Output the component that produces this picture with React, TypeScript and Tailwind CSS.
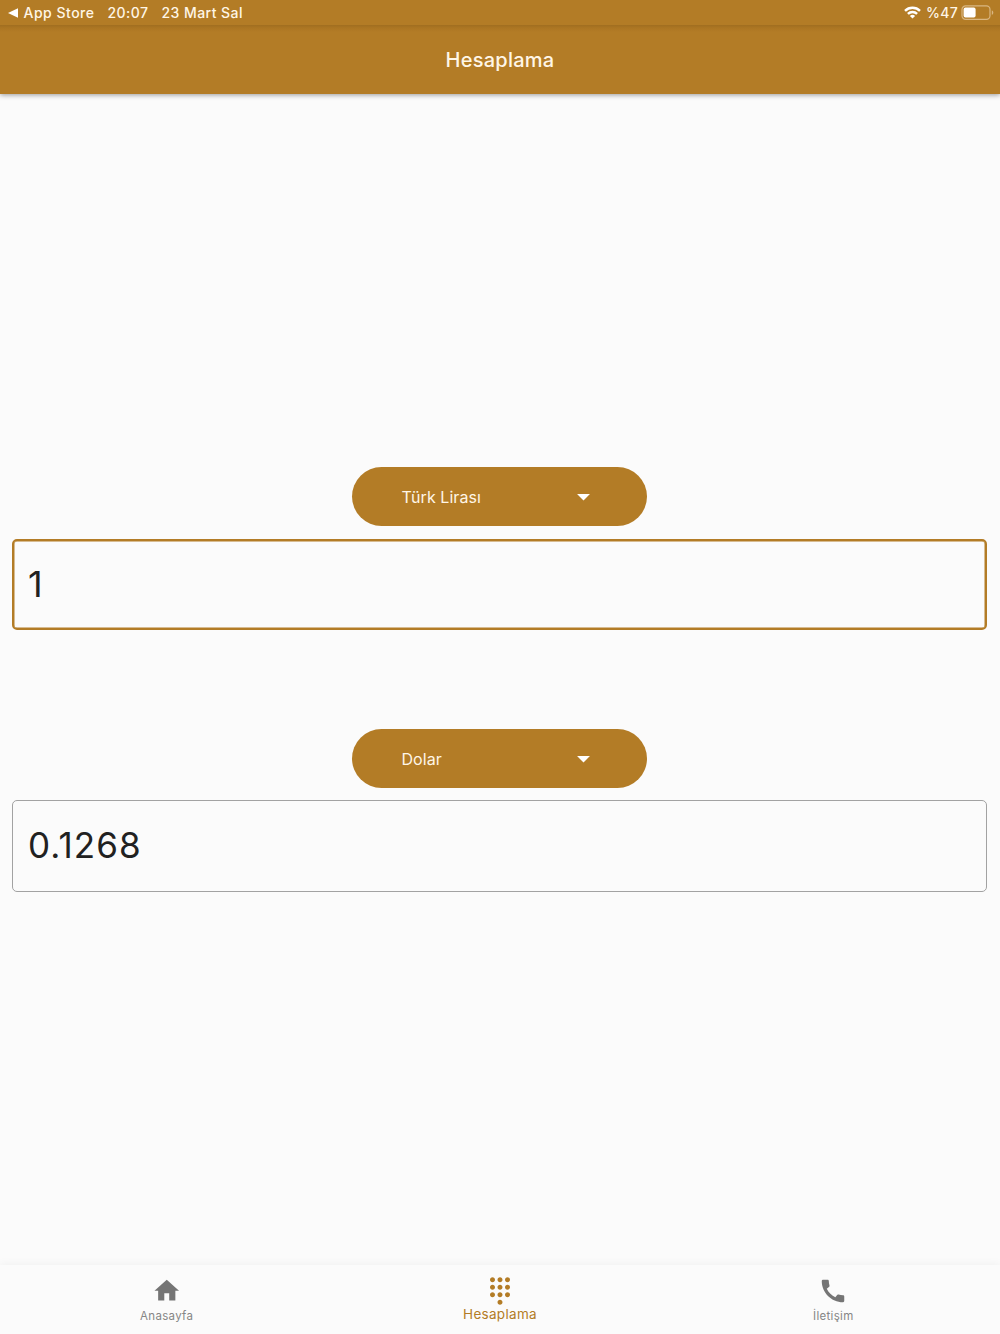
import { MdArrowDropDown, MdCall, MdDialpad, MdHome } from "react-icons/md";

function StatusBar() {
    return (
        <div className="h-[25px] pl-2 pr-[6px] flex items-center justify-between text-[14px] font-medium leading-none text-[#fff6e6]">
            <div className="flex items-center">
                <svg className="w-[10px] h-[10px] mr-[5.5px]" viewBox="0 0 10 10" fill="white">
                    <path d="M0 5 10 .3v9.4z" />
                </svg>
                <span className="w-[84px] tracking-[0.5px]">App Store</span>
                <span className="w-[54px] tracking-[0.45px]">20:07</span>
                <span className="tracking-[0.45px]">23 Mart Sal</span>
            </div>
            <div className="flex items-center">
                <svg className="w-[17px] h-[13px] mr-[5px]" viewBox="0 0 17 13" fill="none" stroke="white" strokeWidth="2.4">
                    <path d="M1 4.9a10.6 10.6 0 0 1 15 0" />
                    <path d="M3.9 7.9a6.5 6.5 0 0 1 9.2 0" />
                    <path d="M8.5 12.6 5.9 10a3.7 3.7 0 0 1 5.2 0z" fill="white" stroke="none" />
                </svg>
                <span className="w-[35px] tracking-[0.3px]">%47</span>
                <svg className="w-[33px] h-[15px]" viewBox="0 0 33 15">
                    <rect x="1" y=".9" width="28" height="13.4" rx="3.6" fill="none" stroke="#d9b681" strokeWidth="1.2" />
                    <rect x="2.6" y="2.6" width="12" height="10" rx="1.8" fill="white" />
                    <path d="M30.8 5.2c2 .9 2 3.9 0 4.8z" fill="#d9b681" />
                </svg>
            </div>
        </div>
    );
}

function CurrencySelect({ label }: { label: string }) {
    return (
        <button className="w-[295px] h-[59px] pl-[49.5px] pr-[48.5px] rounded-full bg-[#b37c26] flex items-center justify-between text-[16px] text-[#fff6e6]">
            <span className="pt-px tracking-[0.05px]">{label}</span>
            <MdArrowDropDown size={31} className="text-white" />
        </button>
    );
}

function NavItem({ icon, label, active }: { icon: React.ReactNode; label: string; active?: boolean }) {
    return (
        <div className={`flex-1 flex flex-col items-center pt-[10px] ${active ? "text-[#b37c26]" : "text-[#757575]"}`}>
            <div className="h-[31px] flex items-center">{icon}</div>
            <span className={active ? "text-[13.5px] leading-[17px] tracking-[0.3px]" : "mt-px text-[11.5px] leading-[18px] tracking-[0.3px] text-[#868686]"}>
                {label}
            </span>
        </div>
    );
}

export default function App() {
    return (
        <div className="w-full h-[1334px] flex flex-col bg-[#fbfbfb] font-['Inter',sans-serif] overflow-hidden">
            <header className="h-[94px] shrink-0 bg-[#b37c26] shadow-[0_1px_5px_rgba(0,0,0,0.4)]">
                <StatusBar />
                <div className="h-[69px] flex items-center justify-center bg-[linear-gradient(to_bottom,#a06e20,#ac7623_3px,#b37c26_7px)]">
                    <h1 className="text-[20px] font-medium tracking-[0.25px] text-[#fff6e6]">Hesaplama</h1>
                </div>
            </header>

            <main className="flex-1 pl-3 pr-[13px] pt-[373px] flex flex-col items-center">
                <CurrencySelect label="Türk Lirası" />
                <div className="w-full h-[91px] mt-[13px] pl-[14px] pb-[2px] flex items-center border-2 border-[#b37c26] shadow-[inset_0_0_0_0.5px_#b37c26] rounded-[5px] text-[36px] text-[#212121]">
                    1
                </div>
                <div className="h-[99px]" />
                <CurrencySelect label="Dolar" />
                <div className="w-full h-[92px] mt-[12px] pl-[15px] pb-px flex items-center border border-[#a2a2a2] rounded-[5px] text-[35px] tracking-[1.1px] text-[#212121]">
                    0.1268
                </div>
            </main>

            <nav className="h-[69px] shrink-0 flex bg-[#fbfbfb] shadow-[0_-2px_8px_rgba(0,0,0,0.04)]">
                <NavItem icon={<MdHome size={29.5} />} label="Anasayfa" />
                <NavItem icon={<MdDialpad size={30} />} label="Hesaplama" active />
                <NavItem icon={<MdCall size={30} />} label="İletişim" />
            </nav>
        </div>
    );
}
